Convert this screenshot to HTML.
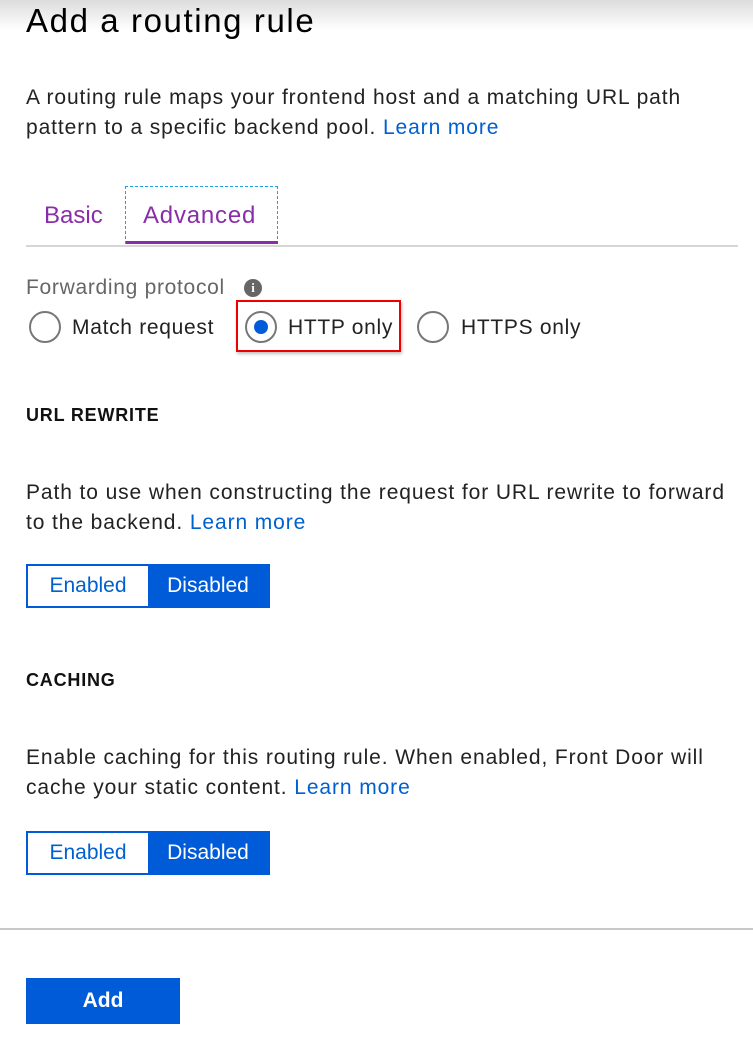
<!DOCTYPE html>
<html><head><style>
body{margin:0;width:753px;height:1047px;background:#fff;position:relative;overflow:hidden;font-family:"Liberation Sans",sans-serif;color:#222}
.a{position:absolute;white-space:nowrap}
.top{position:absolute;left:0;top:0;width:753px;height:30px;background:linear-gradient(#dcdcdc,#fff)}
.p{font-size:21px;line-height:30px;color:#222;letter-spacing:0.9px}
a{color:#0060d0;text-decoration:none}
.h{font-size:18px;font-weight:bold;color:#111;letter-spacing:0.8px}
.rad{position:absolute;width:32px;height:32px;border:2px solid #777;border-radius:50%;box-sizing:border-box}
.tg{position:absolute;left:26px;width:244px;height:44px;border:2px solid #005bd8;box-sizing:border-box;display:flex;font-size:21px}
.tg div{flex:1;display:flex;align-items:center;justify-content:center}
.tg .on{background:#005bd8;color:#fff}
.tg .off{color:#0060d0}
.r{font-size:21px;line-height:28px;letter-spacing:0.7px}
</style></head><body>
<div class="top"></div>
<div class="a" style="left:26px;top:1px;font-size:33px;color:#000;line-height:40px;letter-spacing:1.6px">Add a routing rule</div>
<div class="a p" style="left:26px;top:83px">A routing rule maps your frontend host and a matching URL path<br>pattern to a specific backend pool. <a>Learn more</a></div>
<div class="a" style="left:44px;top:201px;font-size:24px;color:#8a2da8;line-height:30px">Basic</div>
<div class="a" style="left:125px;top:186px;width:153px;height:58px;border:1px dashed #20a0e0;box-sizing:border-box"></div>
<div class="a" style="left:143px;top:201px;font-size:24px;color:#8a2da8;line-height:30px;letter-spacing:0.8px">Advanced</div>
<div class="a" style="left:126px;top:241px;width:152px;height:3px;background:#8a2da8"></div>
<div class="a" style="left:26px;top:245px;width:712px;height:2px;background:#d6d6d6"></div>
<div class="a r" style="left:26px;top:274px;color:#666">Forwarding protocol</div>
<div class="a" style="left:244px;top:279px;width:18px;height:18px;border-radius:50%;background:#666;color:#fff;font-size:13px;font-weight:bold;text-align:center;line-height:18px;font-family:'Liberation Serif',serif">i</div>
<div class="rad" style="left:29px;top:311px"></div>
<div class="a r" style="left:72px;top:314px">Match request</div>
<div class="a" style="left:236px;top:300px;width:165px;height:52px;border:2px solid #e00;box-sizing:border-box;box-shadow:1px 2px 3px rgba(0,0,0,.25)"></div>
<div class="rad" style="left:245px;top:311px"></div>
<div class="a" style="left:254px;top:320px;width:14px;height:14px;border-radius:50%;background:#005bd8"></div>
<div class="a r" style="left:288px;top:314px">HTTP only</div>
<div class="rad" style="left:417px;top:311px"></div>
<div class="a r" style="left:461px;top:314px">HTTPS only</div>
<div class="a h" style="left:26px;top:405px">URL REWRITE</div>
<div class="a p" style="left:26px;top:478px">Path to use when constructing the request for URL rewrite to forward<br>to the backend. <a>Learn more</a></div>
<div class="tg" style="top:564px"><div class="off">Enabled</div><div class="on">Disabled</div></div>
<div class="a h" style="left:26px;top:670px">CACHING</div>
<div class="a p" style="left:26px;top:743px">Enable caching for this routing rule. When enabled, Front Door will<br>cache your static content. <a>Learn more</a></div>
<div class="tg" style="top:831px"><div class="off">Enabled</div><div class="on">Disabled</div></div>
<div class="a" style="left:0;top:928px;width:753px;height:2px;background:#c8c8c8"></div>
<div class="a" style="left:26px;top:978px;width:154px;height:46px;background:#005bd8;color:#fff;font-weight:bold;font-size:21px;display:flex;align-items:center;justify-content:center">Add</div>
</body></html>
